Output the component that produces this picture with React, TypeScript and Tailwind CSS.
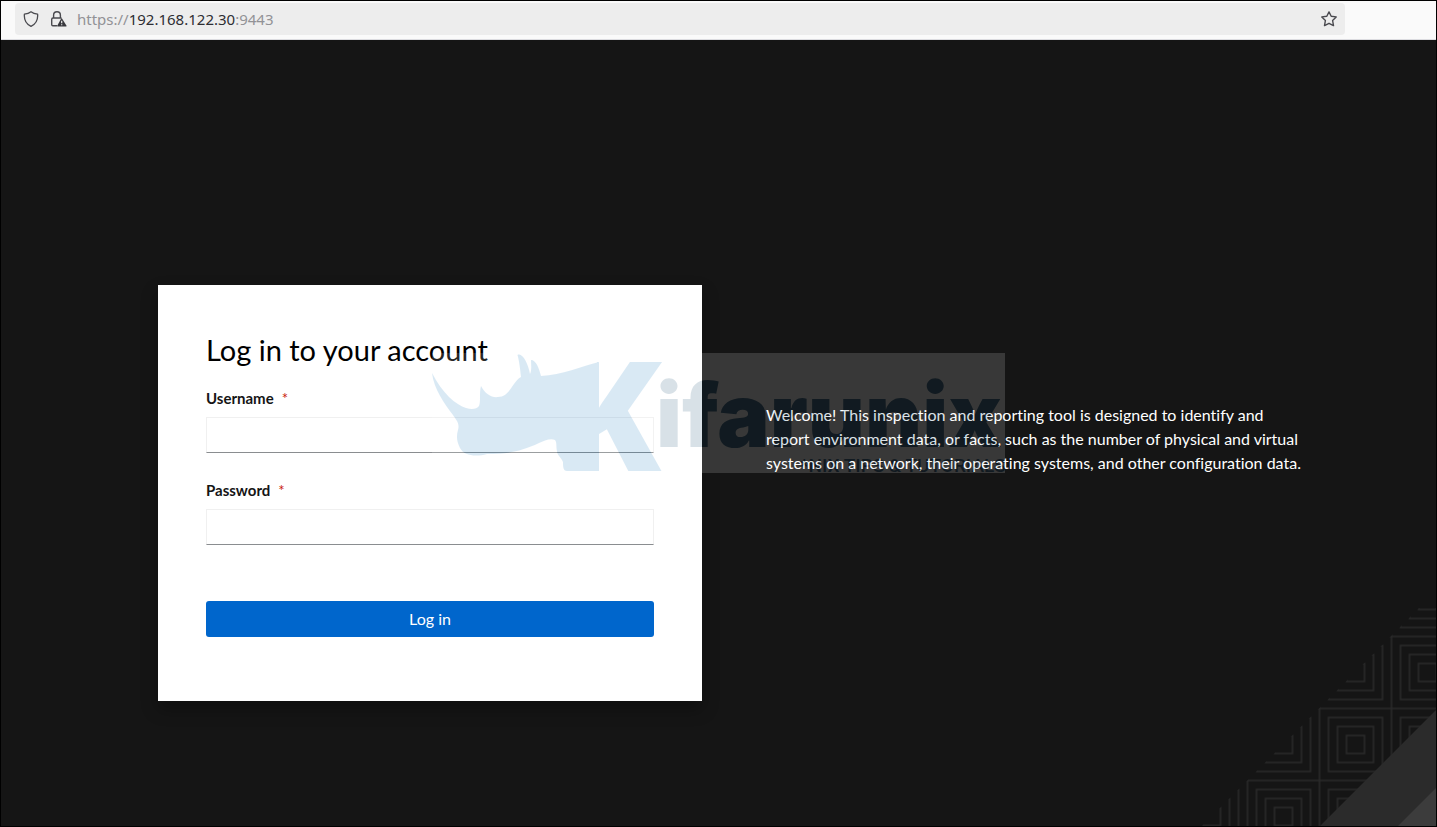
import { useState } from "react";

interface FieldProps {
  id: string;
  label: string;
  type: string;
  value: string;
  onChange: (value: string) => void;
}

function ShieldIcon() {
  return (
    <svg width="16" height="16" viewBox="0 0 16 16" fill="none" stroke="#4a4a4f" strokeWidth="1.3" strokeLinejoin="round">
      <path d="M8 0.8C6.2 2.2 3.8 2.9 1.4 3.1C0.9 8.6 3 13 8 15.3C13 13 15.1 8.6 14.6 3.1C12.2 2.9 9.8 2.2 8 0.8Z" />
    </svg>
  );
}

function LockWarningIcon() {
  return (
    <svg width="16" height="16" viewBox="0 0 16 16" fill="none">
      <path d="M2.6 7V4.2a3.4 3.4 0 0 1 6.8 0V7" stroke="#4a4a4f" strokeWidth="1.4" />
      <path d="M5.6 14.8H1.9A1.4 1.4 0 0 1 0.7 13.4V8.4A1.4 1.4 0 0 1 2 7H10" stroke="#4a4a4f" strokeWidth="1.4" strokeLinecap="round" />
      <path d="M11 7.5L15.400 14.4Q15.800 15.600 14.800 15.600H7Q6 15.600 6.400 14.400L10.200 7.500Q10.600 7 11 7.500Z" fill="#38383d" />
      <path d="M10.700 9.800V12.200M10.700 13.200V14.300" stroke="#ededed" strokeWidth="1.2" />
    </svg>
  );
}

function StarIcon() {
  return (
    <svg width="16" height="16" viewBox="0 0 16 16" fill="none" stroke="#4a4a4f" strokeWidth="1.4" strokeLinejoin="round">
      <path d="M8 0.900L10.200 5.200L15.200 5.900L11.600 9.500L12.500 14.600L8 12.300L3.500 14.600L4.400 9.500L0.800 5.900L5.800 5.200Z" />
    </svg>
  );
}

function AddressBar() {
  return (
    <header className="flex h-[39px] items-start border-b border-[#dcdce0] bg-[#fafafa] pt-0.5 pr-[91px] pl-3.5">
      <div className="flex h-8 flex-1 items-center rounded-sm bg-[#ededed] px-2">
        <button type="button" aria-label="Tracking protection">
          <ShieldIcon />
        </button>
        <button type="button" aria-label="Connection is not secure" className="ml-3">
          <LockWarningIcon />
        </button>
        <p className="ml-2.5 flex-1 font-['Noto_Sans',sans-serif] text-[15px] leading-5 text-[#929296]">
          https://<span className="text-[#2e2e33]">192.168.122.30</span>:9443
        </p>
        <button type="button" aria-label="Bookmark this page">
          <StarIcon />
        </button>
      </div>
    </header>
  );
}

function Field({ id, label, type, value, onChange }: FieldProps) {
  return (
    <div>
      <label htmlFor={id} className="block text-[15px] leading-5 font-bold text-[#151515]">
        {label}
        <span className="ml-2 font-normal text-[#c9190b]">*</span>
      </label>
      <input
        id={id}
        type={type}
        required
        value={value}
        onChange={(e) => onChange(e.target.value)}
        className="mt-[9px] block h-9 w-full border border-[#f0f0f0] border-b-[#8a8d90] bg-white px-2 outline-none"
      />
    </div>
  );
}

function BackgroundPattern() {
  return (
    <svg width="236" height="218" viewBox="0 0 236 218" className="absolute right-0 bottom-0" aria-hidden="true">
      <defs>
        <pattern id="squares" x="46.5" y="27.5" width="72" height="72" patternUnits="userSpaceOnUse">
          <g fill="none" stroke="#292929" strokeWidth="1.6">
            <path d="M0 1H72M1 0V72" />
            <rect x="10" y="10" width="54" height="54" />
            <rect x="19" y="19" width="36" height="36" />
            <rect x="28" y="28" width="18" height="18" />
          </g>
        </pattern>
      </defs>
      <path d="M219 0H236V218H2Z" fill="url(#squares)" />
      <path d="M236 102V218H120Z" fill="#2b2b2b" />
      <path d="M236 180V218H198Z" fill="#3c3c3c" />
    </svg>
  );
}

function Watermark() {
  return (
    <svg
      width="573"
      height="120"
      viewBox="0 0 573 120"
      className="pointer-events-none absolute top-[68px] left-[274px] opacity-15"
      aria-hidden="true"
    >
      <defs>
        <clipPath id="arms">
          <rect x="165" y="0" width="70" height="120" />
        </clipPath>
      </defs>
      <rect width="573" height="120" fill="#fff" />
      <path
        fill="#0873bc"
        d="M0 20C10 40 24 52 34 55C40 57 45 56 47 53C49 48 47 40 49 33C53 41 60 45 66 44C78 44 80 29 89 24C88 14 87 7 85.500 2C90 -1 96 10 98 21C100 17 99 11 99 7C104 7 107 15 109 23C130 22 150 13 167 9V118H135C131 118 131 113 131 109C129 104 125 102 125 98C124 94 125 89 123 87C118 85 112 88 107 90C88 99 74 101 55 101C44 104 32 103 28 95C25 89 24 84 26 77C28 70 24 67 21 62C12 50 2 36 0 20Z"
      />
      <g clipPath="url(#arms)">
        <text x="125" y="118" fill="#0873bc" fontFamily="'Open Sans', sans-serif" fontWeight="800" fontSize="152">K</text>
      </g>
      <text
        x="224"
        y="94"
        fill="#003c64"
        fontFamily="Inter, sans-serif"
        fontWeight="900"
        fontSize="88"
        className="[font-optical-sizing:none] [font-variation-settings:'opsz'_14]"
      >
        ifarunix
      </text>
      <text x="368" y="119" fill="#003c64" fontFamily="Roboto, sans-serif" fontWeight="500" fontSize="19">*NIX TIPS &amp; TUTORIALS</text>
    </svg>
  );
}

export default function App() {
  const [username, setUsername] = useState("");
  const [password, setPassword] = useState("");

  const handleSubmit = (e: React.FormEvent) => {
    e.preventDefault();
  };

  return (
    <div className="flex min-h-screen flex-col border border-black bg-[#151515] font-['Lato',sans-serif] [font-variant-ligatures:none]">
      <AddressBar />
      <div className="relative flex flex-1 justify-center pt-[245px] pl-[31px]">
        <BackgroundPattern />
        <div className="relative grid w-full max-w-6xl grid-cols-2 items-start gap-16 self-start">
          <main className="bg-white px-12 pt-[47px] pb-16 shadow-[0_8px_16px_rgba(0,0,0,0.3)]">
            <h1 className="text-[29px] leading-9 text-black">Log in to your account</h1>
            <form onSubmit={handleSubmit} className="mt-5">
              <Field id="username" label="Username" type="text" value={username} onChange={setUsername} />
              <div className="mt-[27px]">
                <Field id="password" label="Password" type="password" value={password} onChange={setPassword} />
              </div>
              <button type="submit" className="mt-14 h-9 w-full rounded-[3px] bg-[#0066cc] text-base leading-6 text-white">
                Log in
              </button>
            </form>
          </main>
          <p className="mt-[118px] text-base leading-6 text-white">
            Welcome! This inspection and reporting tool is designed to identify and report environment data, or facts,
            such as the number of physical and virtual systems on a network, their operating systems, and other
            configuration data.
          </p>
          <Watermark />
        </div>
      </div>
    </div>
  );
}
